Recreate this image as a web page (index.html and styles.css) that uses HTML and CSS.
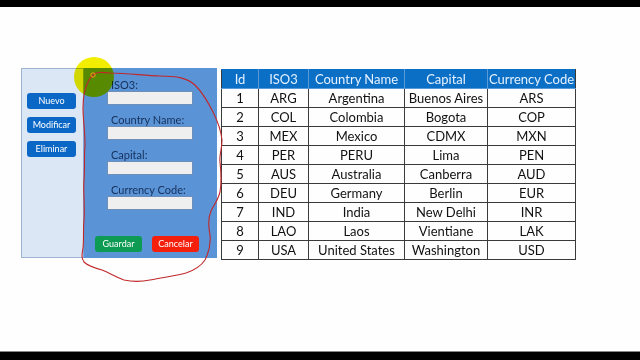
FILE: index.html
```html
<!DOCTYPE html>
<html lang="es">
<head>
<meta charset="utf-8">
<title>Países</title>
<link rel="stylesheet" href="styles.css">
</head>
<body>
<div class="bar-top"></div>
<main class="stage">
  <div class="app">
    <aside class="menu">
      <button class="btn btn-blue">Nuevo</button>
      <button class="btn btn-blue">Modificar</button>
      <button class="btn btn-blue">Eliminar</button>
    </aside>
    <section class="form">
      <div class="field"><label>ISO3:</label><div class="input"></div></div>
      <div class="field"><label>Country Name:</label><div class="input"></div></div>
      <div class="field"><label>Capital:</label><div class="input"></div></div>
      <div class="field"><label>Currency Code:</label><div class="input"></div></div>
      <div class="actions">
        <button class="btn btn-green">Guardar</button>
        <button class="btn btn-red">Cancelar</button>
      </div>
    </section>
    <table class="grid">
      <colgroup>
        <col class="c1"><col class="c2"><col class="c3"><col class="c4"><col class="c5">
      </colgroup>
      <thead>
        <tr><th>Id</th><th>ISO3</th><th>Country Name</th><th>Capital</th><th>Currency Code</th></tr>
      </thead>
      <tbody>
        <tr><td>1</td><td>ARG</td><td>Argentina</td><td>Buenos Aires</td><td>ARS</td></tr>
        <tr><td>2</td><td>COL</td><td>Colombia</td><td>Bogota</td><td>COP</td></tr>
        <tr><td>3</td><td>MEX</td><td>Mexico</td><td>CDMX</td><td>MXN</td></tr>
        <tr><td>4</td><td>PER</td><td>PERU</td><td>Lima</td><td>PEN</td></tr>
        <tr><td>5</td><td>AUS</td><td>Australia</td><td>Canberra</td><td>AUD</td></tr>
        <tr><td>6</td><td>DEU</td><td>Germany</td><td>Berlin</td><td>EUR</td></tr>
        <tr><td>7</td><td>IND</td><td>India</td><td>New Delhi</td><td>INR</td></tr>
        <tr><td>8</td><td>LAO</td><td>Laos</td><td>Vientiane</td><td>LAK</td></tr>
        <tr><td>9</td><td>USA</td><td>United States</td><td>Washington</td><td>USD</td></tr>
      </tbody>
    </table>
  </div>
  <div class="cursor"></div>
  <svg class="ink" width="640" height="344" viewBox="0 7 640 344">
    <path d="M93 75 C96 72 100 72 110 73 C130 73 145 76 160 76 C177 76 187 78 195 85 C203 93 208 102 213 112 C218 122 221 130 222 140 C222 150 219 155 220 162 C221 172 222 180 220 192 C218 200 214 205 211 211 C208 218 208 225 210 235 C211 245 209 252 205 260 C201 266 195 270 186 273 C175 276 165 277 150 280 C140 282 133 282 124 280 C115 277 110 273 102 270 C95 268 88 266 84 262 C81 258 82 254 83 248 C84 240 83 230 84 220 C85 205 83 190 84 180 C85 165 84 155 85 145 C85 130 83 120 83 108 C83 98 84 90 88 82 C90 78 92 76 93 75"
      fill="none" stroke="#c0282a" stroke-width="1.1"/>
    <circle cx="93" cy="75" r="2.2" fill="none" stroke="#f29a1a" stroke-width="1"/>
  </svg>
</main>
<div class="bar-bottom"></div>
</body>
</html>
```

FILE: styles.css
```css
* { box-sizing: border-box; }
html, body { margin: 0; padding: 0; }
body {
  width: 640px;
  height: 360px;
  background: #fefefe;
  font-family: Lato, "Open Sans", sans-serif;
  overflow: hidden;
}
.bar-top { height: 7px; background: #000; }
.bar-bottom { height: 9px; background: #000; border-top: 1px solid #888; }
.stage {
  position: relative;
  height: 344px;
  padding: 61px 0 0 21px;
}
.app {
  display: flex;
  align-items: flex-start;
}
.menu {
  width: 62px;
  height: 190px;
  background: #dce7f5;
  border: 1px solid #9fb4d0;
  border-right: none;
  display: flex;
  flex-direction: column;
  gap: 8px;
  padding: 24px 0 0 5px;
}
.btn {
  border: none;
  border-radius: 3px;
  color: #fff;
  font-family: Lato, "Open Sans", sans-serif;
  font-size: 9px;
  height: 16px;
  padding: 0;
  line-height: 16px;
  text-align: center;
}
.btn-blue { width: 49px; background: #0b67c6; }
.btn-green { width: 47px; background: #0d9a52; }
.btn-red { width: 47px; background: #f5200c; }
.form {
  width: 134px;
  height: 190px;
  background: #5b94d6;
  border-left: 1px solid #7fa6d4;
  padding: 11px 0 0 23px;
  display: flex;
  flex-direction: column;
  gap: 9px;
}
.field { display: flex; flex-direction: column; }
.field label {
  font-size: 11px;
  line-height: 12px;
  height: 12px;
  color: #15305c;
  padding-left: 4px;
}
.input {
  width: 86px;
  height: 14px;
  background: #efefef;
  border: 1px solid #6f8fb8;
}
.actions {
  display: flex;
  gap: 10px;
  margin: 17px 0 0 -12px;
}
.grid {
  margin: 1px 0 0 4px;
  border-collapse: collapse;
  table-layout: fixed;
  width: 354px;
  font-size: 13px;
  color: #111;
}
.c1 { width: 37px; }
.c2 { width: 50px; }
.c3 { width: 96px; }
.c4 { width: 83px; }
.c5 { width: 88px; }
.grid th, .grid td {
  height: 19px;
  padding: 0;
  text-align: center;
  line-height: 17px;
  white-space: nowrap;
  font-weight: normal;
}
.grid th {
  background: #0b6fc6;
  color: #e4f1ff;
  border: 1px solid #5a9ad8;
  border-top-color: #0b6fc6;
}
.grid td {
  border: 1px solid #3a3a3a;
}
.grid thead tr th:first-child { border-left-color: #3a3a3a; }
.grid thead tr th:last-child { border-right-color: #3a3a3a; }
.cursor {
  position: absolute;
  left: 74px;
  top: 50px;
  width: 40px;
  height: 40px;
  border-radius: 50%;
  background: #f4ee00;
  mix-blend-mode: multiply;
}
.ink {
  position: absolute;
  left: 0;
  top: 0;
  pointer-events: none;
}
```
